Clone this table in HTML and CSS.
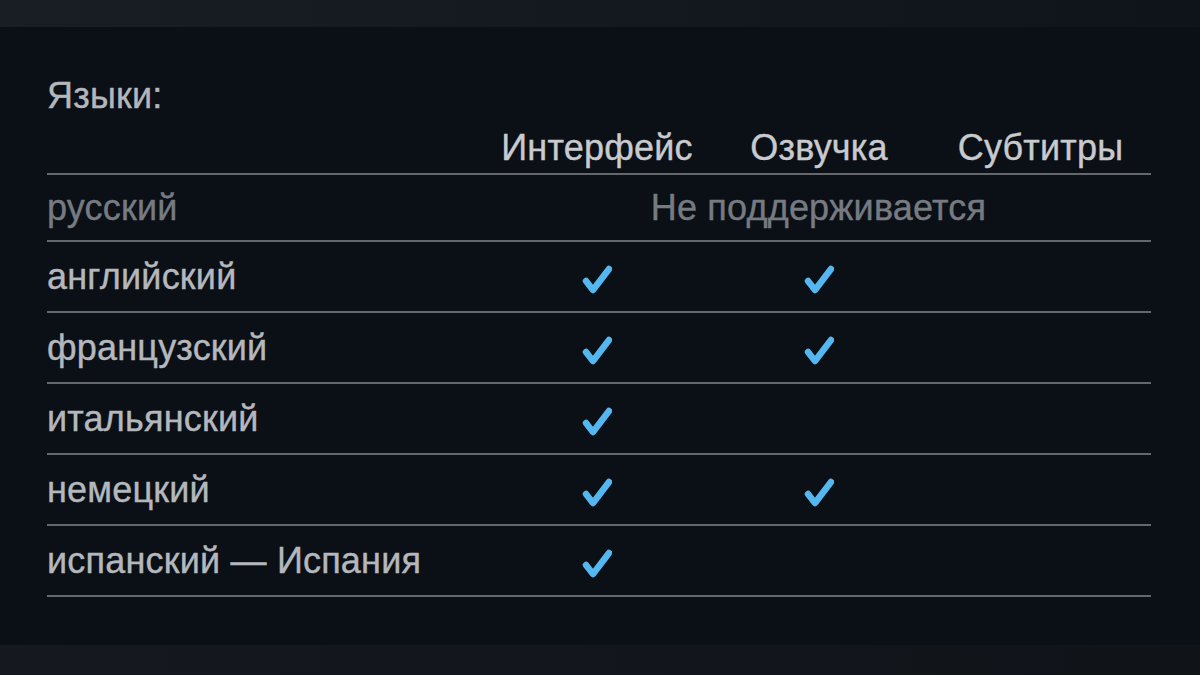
FILE: index.html
```html
<!DOCTYPE html>
<html lang="ru">
<head>
<meta charset="utf-8">
<title>Языки</title>
<link rel="stylesheet" href="styles.css">
</head>
<body>
<div class="topbar"></div>
<main class="panel">
  <div class="title">Языки:</div>
  <div class="langs">
    <div class="row head">
      <div class="cell name"></div>
      <div class="cell">Интерфейс</div>
      <div class="cell">Озвучка</div>
      <div class="cell">Субтитры</div>
    </div>
    <div class="row muted">
      <div class="cell name">русский</div>
      <div class="cell span3">Не поддерживается</div>
    </div>
    <div class="row">
      <div class="cell name">английский</div>
      <div class="cell"><svg class="chk" viewBox="0 0 30 30"><polyline points="4,17 11,26 27,5"/></svg></div>
      <div class="cell"><svg class="chk" viewBox="0 0 30 30"><polyline points="4,17 11,26 27,5"/></svg></div>
      <div class="cell"></div>
    </div>
    <div class="row">
      <div class="cell name">французский</div>
      <div class="cell"><svg class="chk" viewBox="0 0 30 30"><polyline points="4,17 11,26 27,5"/></svg></div>
      <div class="cell"><svg class="chk" viewBox="0 0 30 30"><polyline points="4,17 11,26 27,5"/></svg></div>
      <div class="cell"></div>
    </div>
    <div class="row">
      <div class="cell name">итальянский</div>
      <div class="cell"><svg class="chk" viewBox="0 0 30 30"><polyline points="4,17 11,26 27,5"/></svg></div>
      <div class="cell"></div>
      <div class="cell"></div>
    </div>
    <div class="row">
      <div class="cell name">немецкий</div>
      <div class="cell"><svg class="chk" viewBox="0 0 30 30"><polyline points="4,17 11,26 27,5"/></svg></div>
      <div class="cell"><svg class="chk" viewBox="0 0 30 30"><polyline points="4,17 11,26 27,5"/></svg></div>
      <div class="cell"></div>
    </div>
    <div class="row">
      <div class="cell name">испанский — Испания</div>
      <div class="cell"><svg class="chk" viewBox="0 0 30 30"><polyline points="4,17 11,26 27,5"/></svg></div>
      <div class="cell"></div>
      <div class="cell"></div>
    </div>
  </div>
</main>
<div class="bottombar"></div>
</body>
</html>
```

FILE: styles.css
```css
html, body {
  margin: 0;
  padding: 0;
}
body {
  width: 1200px;
  height: 675px;
  overflow: hidden;
  background: #0c1017;
  font-family: "Liberation Sans", Arial, sans-serif;
  color: #c4c7cb;
  display: flex;
  flex-direction: column;
}
.topbar {
  height: 27px;
  background: linear-gradient(90deg, #191d24 0%, #13171e 60%, #0f131a 100%);
  flex: none;
}
.panel {
  flex: 1;
  padding: 49px 49px 0 47px;
  background: #0b0f16;
}
.bottombar {
  height: 30px;
  flex: none;
  background: linear-gradient(90deg, #15191f 0%, #12161c 60%, #101419 100%);
}
.title {
  font-size: 36px;
  line-height: 40px;
  color: #b3b7bc;
  letter-spacing: 0.2px;
  -webkit-text-stroke: 0.4px currentColor;
}
.langs {
  width: 1104px;
}
.row {
  display: grid;
  grid-template-columns: 439px 222px 222px 221px;
  align-items: center;
  height: 69px;
  border-bottom: 2px solid #64676c;
  font-size: 36px;
  line-height: 40px;
  letter-spacing: 0.2px;
  -webkit-text-stroke: 0.4px currentColor;
}
.row.head {
  height: auto;
  padding: 12px 0 5px;
  align-items: end;
  color: #c8cacd;
}
.row.muted {
  height: 65px;
}
.cell {
  text-align: center;
  display: flex;
  justify-content: center;
  align-items: center;
}
.cell.name {
  justify-content: flex-start;
  text-align: left;
  color: #b4b8bd;
}
.cell.span3 {
  grid-column: span 3;
}
.row.muted .cell,
.row.muted .cell.name {
  color: #767b82;
}
.chk {
  width: 30px;
  height: 30px;
  margin-top: 4px;
}
.chk polyline {
  fill: none;
  stroke: #55b7f0;
  stroke-width: 6.5;
  stroke-linejoin: round;
  stroke-linecap: round;
}
```
